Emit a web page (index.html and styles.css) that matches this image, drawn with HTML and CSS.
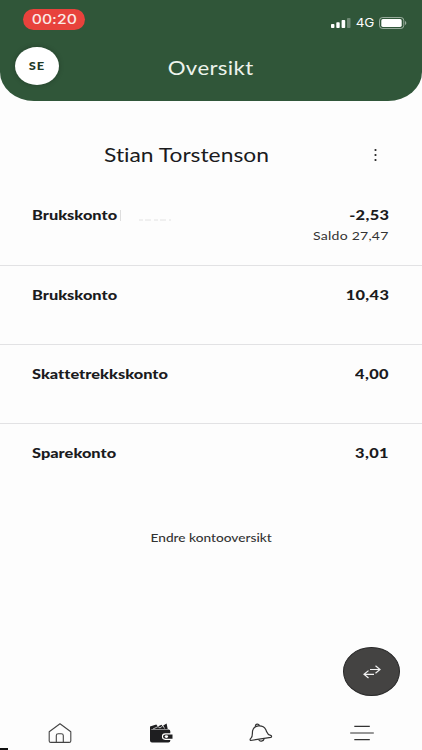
FILE: index.html
```html
<!DOCTYPE html>
<html lang="no">
<head>
    <meta charset="UTF-8">
    <meta name="viewport" content="width=device-width, initial-scale=1.0">
    <title>Oversikt</title>
    <link rel="stylesheet" href="styles.css">
</head>
<body>
    <div class="app">
        <header class="header">
            <div class="status-bar">
                <span class="recording"><span class="wide">00:20</span></span>
                <div class="status-icons">
                    <svg class="signal" width="20" height="10" viewBox="0 0 20 10" fill="#fff">
                        <rect x="0" y="6" width="3.4" height="4" rx="0.8"/>
                        <rect x="5.3" y="4.2" width="3.4" height="5.8" rx="0.8"/>
                        <rect x="10.6" y="2" width="3.6" height="8" rx="0.8"/>
                        <rect x="16" y="0" width="3.5" height="10" rx="0.8" opacity="0.3"/>
                    </svg>
                    <span class="network"><span class="wide">4G</span></span>
                    <svg class="battery" width="28" height="12" viewBox="0 0 28 12">
                        <rect x="0.5" y="0.5" width="24.3" height="11" rx="3" fill="none" stroke="#fff" stroke-opacity="0.5"/>
                        <rect x="2.3" y="2.1" width="20.4" height="7.8" rx="1.6" fill="#fff"/>
                        <path d="M26 4v4c1.8-.6 1.8-3.400 0-4z" fill="#fff" opacity="0.5"/>
                    </svg>
                </div>
            </div>
            <div class="title-bar">
                <div class="avatar"><span class="wide">SE</span></div>
                <h1><span class="wide">Oversikt</span></h1>
            </div>
        </header>

        <main>
            <div class="owner">
                <h2><span class="wide">Stian Torstenson</span></h2>
                <svg class="more" width="6" height="14" viewBox="0 0 6 14" fill="#222">
                    <circle cx="3.500" cy="2" r="1.1"/>
                    <circle cx="3.500" cy="7" r="1.1"/>
                    <circle cx="3.500" cy="12" r="1.1"/>
                </svg>
            </div>

            <ul class="accounts">
                <li class="account">
                    <span class="name wide">Brukskonto</span>
                    <i class="divider"></i>
                    <svg class="faded" width="32" height="2" viewBox="0 0 32 2" stroke="#e2e2e2" stroke-dasharray="4 2 6 3">
                        <path d="M0 1H32"/>
                    </svg>
                    <div class="amounts">
                        <span class="amount wide">-2,53</span>
                        <span class="balance wide">Saldo 27,47</span>
                    </div>
                </li>
                <li class="account">
                    <span class="name wide">Brukskonto</span>
                    <div class="amounts"><span class="amount wide">10,43</span></div>
                </li>
                <li class="account">
                    <span class="name wide">Skattetrekkskonto</span>
                    <div class="amounts"><span class="amount wide">4,00</span></div>
                </li>
                <li class="account">
                    <span class="name wide">Sparekonto</span>
                    <div class="amounts"><span class="amount wide">3,01</span></div>
                </li>
            </ul>

            <a class="edit"><span class="wide">Endre kontooversikt</span></a>
        </main>

        <div class="transfer">
            <svg width="18" height="14" viewBox="0 0 18 14" fill="none" stroke="#f2f2f2" stroke-width="1.2">
                <path d="M7 4.500H17M12.500.800L17 4.500L12.500 8.200M11 9.300H1M5.500 5.600L1 9.300L5.500 13"/>
            </svg>
        </div>

        <nav class="tabs">
            <a>
                <svg width="24" height="20" viewBox="0 0 24 20" fill="none" stroke="#444" stroke-width="1.1" stroke-linejoin="round">
                    <path d="M1.200 8.700L12 .800L22.800 8.700V18Q22.800 19.400 21.200 19.400H2.800Q1.200 19.400 1.200 18z"/>
                    <path d="M8.300 19.400V12.500Q8.300 10.700 10.300 10.700H13.300Q15.300 10.700 15.300 12.500V19.400"/>
                </svg>
            </a>
            <a>
                <svg width="24" height="20" viewBox="0 0 24 20">
                    <path d="M1 3.400L7.300 1.500L8.800 3.500L12.500 1.800L13.500 3L17.600.500L18.700 6H1z" fill="#1e1e20"/>
                    <path d="M4 6L9 3.600L11 5L14 2.500L15.500 5.500" fill="none" stroke="#fff" stroke-width="0.7"/>
                    <path d="M1 4.500Q1 6.500 3 6.500H19.500Q21.300 6.500 21.300 8.200V17.700Q21.300 19.500 19.300 19.500H3Q1 19.500 1 17.500z" fill="#1e1e20"/>
                    <path d="M23.500 10.300H16.200Q12.900 10.300 12.900 13.600T16.200 16.900H23.500z" fill="#fff"/>
                    <path d="M23.500 11.400H16.500Q14 11.400 14 13.600T16.500 15.800H23.500z" fill="#1e1e20"/>
                    <ellipse cx="17.400" cy="13.600" rx="1.700" ry="1.300" fill="#fff"/>
                </svg>
            </a>
            <a>
                <svg width="24" height="20" viewBox="0 0 24 20" fill="none" stroke="#333" stroke-width="1.200" stroke-linejoin="round">
                    <path d="M1.600 17.500C.800 17 1.100 15.800 1.900 15.300C4.500 13.500 2.500 9.700 4 6.600C5 4.400 7 3.100 9.400 2.900C12.700 2.700 15.500 4 16.700 6.500C18.200 9.600 18 11.500 21.600 12.400C22.800 12.700 22.900 14 21.800 14.300z"/>
                    <path d="M6.500 3.400C6 .500 10.200.300 10.300 2.900M9.700 16.500C10.200 19.100 14.800 18.400 15.200 15.600"/>
                </svg>
            </a>
            <a>
                <svg width="24" height="16" viewBox="0 0 24 16" fill="none" stroke="#333" stroke-width="1.200">
                    <path d="M4.300 1.300H19.800M.200 8H23.800M4.300 14.700H19.800"/>
                </svg>
            </a>
        </nav>
        <div class="corner-mark"></div>
    </div>
</body>
</html>
```
FILE: styles.css
```css
* {
    box-sizing: border-box;
}
body {
    margin: 0;
    font-family: Lato, "Liberation Sans", sans-serif;
    font-variant-ligatures: none;
    background-color: #fdfdfd;
    color: #1b1b1d;
}
h1, h2, ul {
    margin: 0;
    padding: 0;
    font-weight: normal;
}
.app {
    position: relative;
    display: flex;
    flex-direction: column;
    height: 750px;
    overflow: hidden;
}
/* The type is set wider than the font's own width */
.wide {
    display: inline-block;
    white-space: nowrap;
    transform: scaleX(1.17);
}

/* Header */
.header {
    height: 101px;
    padding-top: 9px;
    background-color: #305639;
    border-radius: 0 0 34px 34px / 0 0 29px 29px;
    color: #fff;
}
.status-bar {
    display: flex;
    justify-content: space-between;
    align-items: flex-start;
    height: 38px;
    padding: 0 15px 0 23px;
    font-family: Inter, sans-serif;
}
.recording {
    width: 62px;
    height: 21px;
    border-radius: 11px;
    background-color: #e8423c;
    color: #fbe9e6;
    font-size: 13.500px;
    font-weight: 500;
    line-height: 21px;
    text-align: center;
}
.status-icons {
    display: flex;
    align-items: center;
    margin-top: 8px;
}
.network {
    width: 18px;
    margin: 0 5px 0 5px;
    font-size: 11.500px;
    line-height: 12px;
    text-align: center;
}
.title-bar {
    display: grid;
    grid-template-columns: 59px 1fr 59px;
    align-items: center;
    height: 38px;
}
.avatar {
    justify-self: end;
    width: 44px;
    height: 38px;
    border-radius: 50%;
    background-color: #fff;
    color: #1f3a29;
    font-size: 11px;
    font-weight: 900;
    line-height: 38px;
    text-align: center;
    letter-spacing: 0.6px;
    box-shadow: 0 0 5px rgba(0, 0, 0, 0.25);
}
.title-bar h1 {
    padding-top: 4px;
    color: #edf3ec;
    font-size: 19px;
    line-height: 24px;
    text-align: center;
    letter-spacing: 0.3px;
}

/* Owner */
.owner {
    display: grid;
    grid-template-columns: 1fr 50px;
    align-items: center;
    height: 54px;
    margin-top: 27px;
}
.owner h2 {
    font-size: 19.500px;
    line-height: 24px;
    text-align: center;
}
.more {
    display: block;
}

/* Accounts */
.accounts {
    list-style: none;
}
.account {
    display: flex;
    height: 79.400px;
    padding: 19px 33px 0 32px;
    border-bottom: 1px solid #e2e2e4;
    font-size: 14px;
    line-height: 20px;
}
.account:first-child {
    height: 83.500px;
    padding-top: 23px;
}
.account:last-child {
    border-bottom: 0;
}
.name {
    height: 20px;
    font-weight: 900;
    transform-origin: left center;
}
.divider {
    width: 1px;
    height: 11px;
    margin: 5px 0 0 15px;
    background-color: #dedede;
}
.faded {
    margin: 14px 0 0 18px;
}
.amounts {
    display: flex;
    flex-direction: column;
    align-items: flex-end;
    margin-left: auto;
}
.amount, .balance {
    transform-origin: right center;
}
.amount {
    font-weight: 900;
    letter-spacing: 0.3px;
}
.balance {
    margin-top: 1px;
    color: #333;
    font-size: 12px;
    letter-spacing: 0.2px;
}
.edit {
    display: block;
    margin-top: 24px;
    color: #333;
    font-size: 12px;
    font-weight: 500;
    line-height: 20px;
    text-align: center;
}
.edit .wide {
    transform: scaleX(1.14);
}

/* Transfer button floats over the list */
.transfer {
    position: absolute;
    right: 22px;
    bottom: 54px;
    display: flex;
    justify-content: center;
    align-items: center;
    width: 57px;
    height: 49px;
    border: 1px solid #292929;
    border-radius: 50%;
    background-color: #444342;
}

/* Bottom navigation */
.tabs {
    display: grid;
    grid-template-columns: repeat(4, 100.500px);
    align-items: center;
    height: 20px;
    margin: auto 0 7px 10px;
}
.tabs a {
    display: flex;
    justify-content: center;
}
.corner-mark {
    position: absolute;
    left: 0;
    bottom: 0;
    width: 8px;
    height: 2px;
    background-color: #111;
}
```
